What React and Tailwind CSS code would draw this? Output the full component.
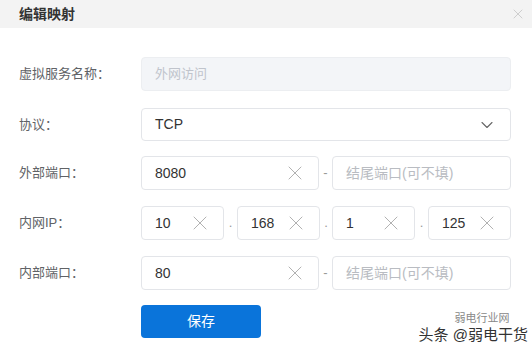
import { ChevronDown, X } from 'lucide-react';

const font = { fontFamily: '"Liberation Sans", "Noto Sans CJK SC", sans-serif' };

const ClearIcon = () => <X className="w-[24px] h-[24px] text-[#a8a8a8]" strokeWidth={0.9} />;

const Field = ({ value, placeholder, width, clear = true }) => (
  <div
    className={`${width} h-[34px] border border-[#e3e5e9] rounded-[4px] flex items-center justify-between pl-[13px] pr-[11px] bg-white`}
  >
    {value ? (
      <span className="text-[14px] text-[#333]">{value}</span>
    ) : (
      <span className="text-[14px] text-[#b9bcc2]">{placeholder}</span>
    )}
    {clear && value && <ClearIcon />}
  </div>
);

const Sep = ({ ch, w }) => (
  <div className={`${w} flex items-center justify-center text-[13px] text-[#999]`}>{ch}</div>
);

const Row = ({ label, mt, children }) => (
  <div className={`flex items-center ${mt}`}>
    <div className="w-[122px] text-[13px] text-[#606266]">{label}</div>
    {children}
  </div>
);

export default function App() {
  return (
    <div className="relative w-[532px] h-[349px] bg-white overflow-hidden" style={font}>
      {/* Header */}
      <div className="h-[28px] bg-[#f3f3f3] flex items-center justify-between pl-[19px] pr-[6px]">
        <span className="text-[14px] font-semibold text-[#333]">编辑映射</span>
        <X className="w-[16px] h-[16px] text-[#c4c4c4]" strokeWidth={1.2} />
      </div>

      <div className="pl-[19px] pt-[29px]">
        <Row label="虚拟服务名称：">
          <div className="w-[370px] h-[34px] rounded-[4px] bg-[#f3f5f8] border border-[#eceef1] flex items-center pl-[13px]">
            <span className="text-[13px] text-[#c0c4cc]">外网访问</span>
          </div>
        </Row>

        <Row label="协议：" mt="mt-[17px]">
          <div className="w-[370px] h-[33px] rounded-[4px] border border-[#e3e5e9] flex items-center justify-between pl-[13px] pr-[13px]">
            <span className="text-[14px] text-[#333]">TCP</span>
            <ChevronDown className="w-[20px] h-[20px] text-[#666]" strokeWidth={1.3} />
          </div>
        </Row>

        <Row label="外部端口：" mt="mt-[15px]">
          <Field value="8080" width="w-[178px]" />
          <Sep ch="-" w="w-[13px]" />
          <Field placeholder="结尾端口(可不填)" width="w-[179px]" />
        </Row>

        <Row label="内网IP：" mt="mt-[16px]">
          <Field value="10" width="w-[83px]" />
          <Sep ch="." w="w-[13px]" />
          <Field value="168" width="w-[83px]" />
          <Sep ch="." w="w-[12px]" />
          <Field value="1" width="w-[83px]" />
          <Sep ch="." w="w-[13px]" />
          <Field value="125" width="w-[83px]" />
        </Row>

        <Row label="内部端口：" mt="mt-[16px]">
          <Field value="80" width="w-[178px]" />
          <Sep ch="-" w="w-[13px]" />
          <Field placeholder="结尾端口(可不填)" width="w-[179px]" />
        </Row>

        <div className="flex mt-[15px] pl-[122px]">
          <button className="w-[120px] h-[33px] rounded-[4px] bg-[#0a74da] text-white text-[14px]">保存</button>
        </div>
      </div>

      {/* watermark */}
      <div className="absolute right-[4px] bottom-[7px] text-[15px] text-[#333] leading-none">
        <span className="absolute left-[36px] -top-[14px] text-[11px] leading-none text-[#888]">弱电行业网</span>
        <span className="relative">头条 @弱电干货</span>
      </div>
    </div>
  );
}
